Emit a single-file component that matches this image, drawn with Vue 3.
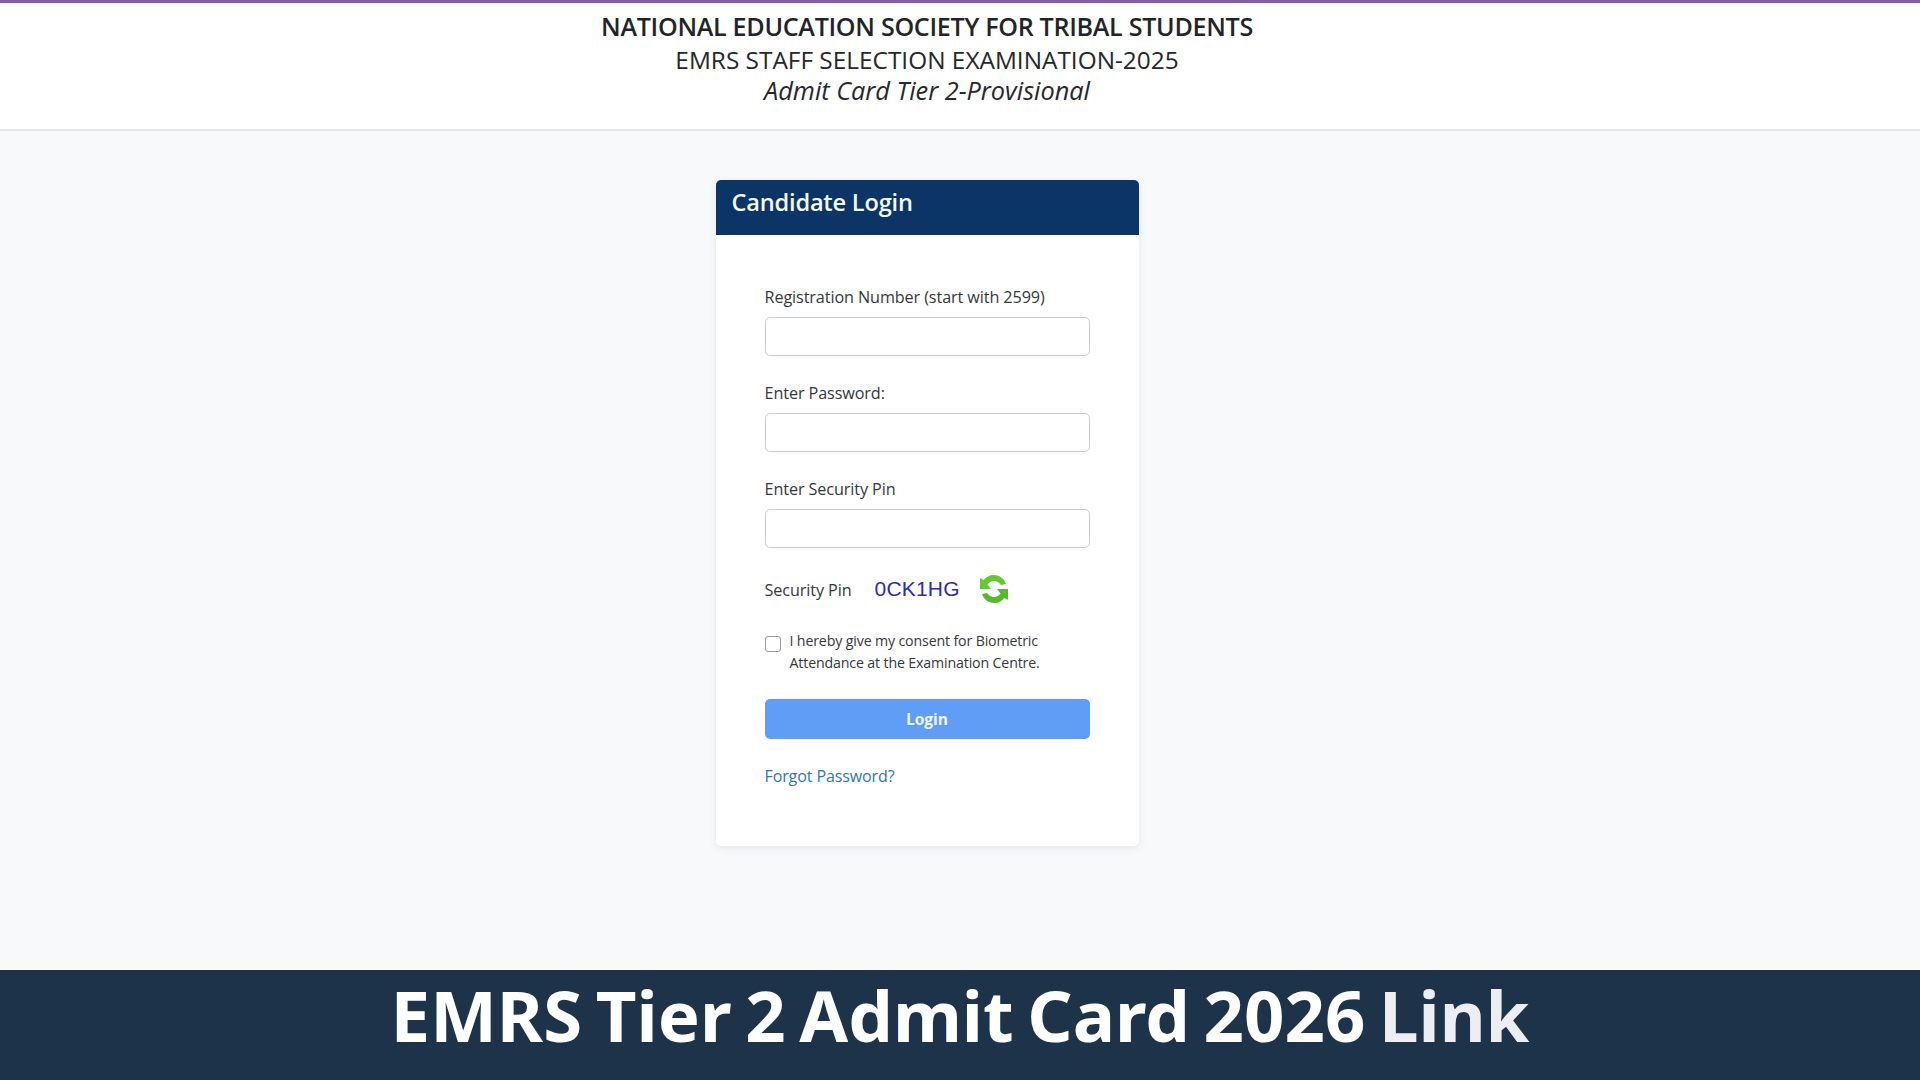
<template>
  <div class="page">
    <header class="top">
      <h1>NATIONAL EDUCATION SOCIETY FOR TRIBAL STUDENTS</h1>
      <h2>EMRS STAFF SELECTION EXAMINATION-2025</h2>
      <h3>Admit Card Tier 2-Provisional</h3>
    </header>
    <main class="main">
      <section class="card">
        <div class="card-head">Candidate Login</div>
        <form class="card-body" @submit.prevent>
          <div class="field">
            <label>Registration Number (start with 2599)</label>
            <input type="text" />
          </div>
          <div class="field">
            <label>Enter Password:</label>
            <input type="password" />
          </div>
          <div class="field">
            <label>Enter Security Pin</label>
            <input type="text" />
          </div>
          <div class="pin">
            <span class="pin-label">Security Pin</span>
            <span class="pin-code">0CK1HG</span>
            <svg class="refresh" viewBox="0 0 30 30" width="30" height="30" aria-hidden="true">
              <path d="M27 10C25 4 20 1 14.500 1C10.500 1 7 3 4.500 6L1 4V15H12L8.500 10.500C10 8.500 12 7 15 7C18 7 20.500 9 22 11Z" fill="#62cb30"/>
              <path d="M27 10C25 4 20 1 14.500 1C10.500 1 7 3 4.500 6L1 4V15H12L8.500 10.500C10 8.500 12 7 15 7C18 7 20.500 9 22 11Z" fill="#56bb28" transform="rotate(180 15 15)"/>
            </svg>
          </div>
          <label class="consent">
            <input type="checkbox" />
            <span>I hereby give my consent for Biometric Attendance at the Examination Centre.</span>
          </label>
          <button class="login" type="submit">Login</button>
          <a class="forgot" href="#">Forgot Password?</a>
        </form>
      </section>
    </main>
    <footer class="banner">EMRS Tier 2 Admit Card 2026 <span class="fade">Link</span></footer>
  </div>
</template>

<script setup>
</script>

<style>
html, body { margin: 0; padding: 0; }
</style>

<style scoped>
.page {
  width: 1920px;
  height: 1080px;
  display: flex;
  flex-direction: column;
  overflow: hidden;
  background: #f8f9fb;
  font-family: "Open Sans", "Noto Sans", sans-serif;
  color: #33383d;
}
.top {
  height: 126px;
  flex: none;
  background: #fff;
  border-top: 3px solid #7f5ea8;
  border-bottom: 2px solid #e3e5e8;
  text-align: center;
  color: #25282c;
  padding-right: 66px;
}
.top h1 {
  margin: 7px 0 0;
  font-size: 25.100px;
  line-height: 32px;
  font-weight: 600;
  letter-spacing: -0.3px;
  color: #212529;
}
.top h2 {
  margin: 2px 0 0;
  font-size: 24.400px;
  line-height: 32px;
  font-weight: 400;
}
.top h3 {
  margin: -2px 0 0;
  font-size: 25.300px;
  line-height: 32px;
  font-weight: 400;
  font-style: italic;
}
.main {
  flex: 1;
  min-height: 0;
  display: flex;
  justify-content: center;
  align-items: flex-start;
  padding: 49px 66px 0 0;
}
.card {
  width: 423px;
  height: 666px;
  background: #fff;
  border-radius: 5px;
  box-shadow: 0 2px 8px rgba(30, 40, 60, 0.09);
  overflow: hidden;
}
.card-head {
  height: 55px;
  box-sizing: border-box;
  padding: 6px 16px 0;
  background: #0b3467;
  color: #f4f8fb;
  font-size: 23.600px;
  line-height: 32px;
  font-weight: 600;
  letter-spacing: -0.2px;
}
.card-body {
  display: flex;
  flex-direction: column;
  padding: 51px 49px 0;
}
.field {
  display: flex;
  flex-direction: column;
  margin-bottom: 26px;
}
.field label {
  font-size: 16.200px;
  line-height: 22px;
  font-weight: 500;
  letter-spacing: -0.1px;
  margin-bottom: 9px;
}
.field input {
  height: 39px;
  box-sizing: border-box;
  border: 1px solid #c9cdd2;
  border-radius: 5px;
  background: #fff;
  outline: none;
}
.pin {
  display: flex;
  align-items: center;
  height: 34px;
  margin-top: -2px;
}
.pin-label {
  width: 110px;
  font-size: 16.200px;
  font-weight: 500;
  letter-spacing: -0.1px;
  padding-top: 2px;
}
.pin-code {
  width: 104px;
  font-family: "Liberation Sans", Arial, sans-serif;
  font-size: 21px;
  color: #2a2fb0;
  letter-spacing: 0.2px;
}
.refresh {
  flex: none;
}
.consent {
  display: flex;
  align-items: flex-start;
  margin-top: 24px;
  font-size: 14.200px;
  line-height: 22px;
  letter-spacing: -0.15px;
}
.consent input {
  width: 16px;
  height: 16px;
  flex: none;
  margin: 6px 9px 0 0;
  appearance: none;
  background: #fff;
  border: 1px solid #9a9ea3;
  border-radius: 3px;
}
.login {
  height: 40px;
  margin-top: 25px;
  border: 0;
  border-radius: 5px;
  background: #5f9df7;
  color: #eef4fe;
  font: inherit;
  font-size: 15.500px;
  font-weight: 700;
}
.forgot {
  margin-top: 25px;
  font-size: 16px;
  line-height: 24px;
  font-weight: 500;
  letter-spacing: -0.1px;
  color: #2f74bd;
  text-decoration: none;
}
.banner {
  flex: none;
  height: 110px;
  box-sizing: border-box;
  padding: 1px 0 0 0;
  background: #1d3349;
  color: #fff;
  text-align: center;
  font-family: "Noto Sans", "Open Sans", sans-serif;
  font-size: 70.700px;
  line-height: 88px;
  font-weight: 700;
  word-spacing: -4.700px;
}
.fade {
  color: #eceef2;
}
</style>
